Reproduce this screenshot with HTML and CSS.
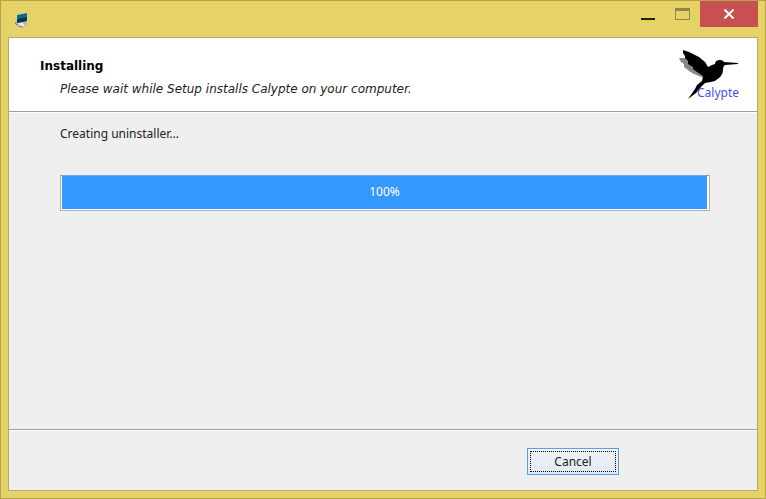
FILE: index.html
```html
<!DOCTYPE html>
<html lang="en">
  <head>
    <meta charset="UTF-8" />
    <meta name="viewport" content="width=device-width, initial-scale=1.0" />
    <title>Calypte Setup</title>
    <link rel="stylesheet" href="styles.css">
  </head>
  <body>
    <div class="window">
      <div class="titlebar">
        <svg class="app-icon" width="16" height="18" viewBox="0 0 16 18" aria-hidden="true">
          <path d="M1 11 L5 9 L13 11 L13 14 L9 17 L2 14 Z" fill="#b9b4b8" />
          <path d="M3 13 L7 11 L11 14 L8 16 Z" fill="#eee6df" />
          <path d="M1 12 L4 14 M5 15 L8 16" stroke="#6f6680" />
          <path d="M2 4 L13 1 L14 10 L3 13 Z" fill="#c6d8d3" />
          <path d="M3 4 L13 2 L13 10 L3 12 Z" fill="#126b82" />
          <path d="M3 8 L13 6 L13 10 L3 12 Z" fill="#07384f" />
        </svg>
        <div class="window-buttons">
          <button class="minimize" aria-label="Minimize">
            <svg width="14" height="12" viewBox="0 0 14 12"><path d="M0 10h14v2H0z" fill="#26210f" /></svg>
          </button>
          <button class="maximize" aria-label="Maximize" disabled>
            <svg width="15" height="12" viewBox="0 0 15 12"><path d="M.5 .5h14v11H.5z" fill="none" stroke="#938643" /><path d="M0 0h15v3H0z" fill="#938643" /></svg>
          </button>
          <button class="close" aria-label="Close">
            <svg width="12" height="10" viewBox="0 0 12 10"><path d="M1.500 .5l9 9M10.500 .5l-9 9" stroke="#fff" stroke-width="2" /></svg>
          </button>
        </div>
      </div>

      <div class="client">
        <header class="header">
          <div>
            <h1>Installing</h1>
            <p class="subtitle">Please wait while Setup installs Calypte on your computer.</p>
          </div>
          <svg class="logo" width="64" height="54" viewBox="0 0 64 54" role="img" aria-label="Calypte">
            <path d="M2 10 L10 10 L22 18 L29 26 L27 30 L22 28 L17 26 L12 23 L7 19 L7 16 L4 14 Z" fill="#888" />
            <path d="M6 2 L12 4 L22 9 L28 14 L31 19 L35 17 L38 16 Q38 12 43 12 Q46 12 47 14 L61 15 L61 16 L48 17 Q46 18 46 21 Q46 27 42 30 Q39 33 34 34 L28 35 L24 39 L19 45 L11 51 L18 41 L20 37 L25 33 L26 28 L20 24 L16 21 L16 19 L11 16 L11 13 L8 10 L8 8 L6 5 Z" fill="#000" />
            <text x="20" y="49" class="logo-text">Calypte</text>
          </svg>
        </header>

        <main class="content">
          <p id="status">Creating uninstaller...</p>
          <div class="progress" role="progressbar" aria-labelledby="status" aria-valuemin="0" aria-valuemax="100" aria-valuenow="100">
            <div class="progress-fill">100%</div>
          </div>
        </main>

        <footer class="footer">
          <button class="cancel">Cancel</button>
        </footer>
      </div>
    </div>
  </body>
</html>
```

FILE: styles.css
```css
* {
  box-sizing: border-box;
}
body {
  margin: 0;
  font-family: "Noto Sans", sans-serif;
  font-size: 12px;
  line-height: 16px;
  color: #222;
}
h1,
p {
  margin: 0;
}
button {
  border: 0;
  padding: 0;
  font: inherit;
  color: inherit;
}
.window {
  display: flex;
  flex-direction: column;
  min-height: 100vh;
  padding: 0 7px 7px;
  background: #e6d367;
  border: 1px solid #b5a446;
}

/* title bar */
.titlebar {
  display: flex;
  justify-content: space-between;
  height: 36px;
  padding-left: 6px;
}
.app-icon {
  margin-top: 10px;
}
.window-buttons {
  display: flex;
  height: 26px;
}
.window-buttons button {
  display: flex;
  align-items: center;
  justify-content: center;
  width: 34px;
  background: none;
}
.window-buttons .close {
  width: 58px;
  margin-left: 1px;
  background: #c75050;
}

/* window contents */
.client {
  display: flex;
  flex-direction: column;
  flex: 1;
  background: #efefef;
  border: 1px solid #b5a873;
}
.header {
  display: flex;
  justify-content: space-between;
  height: 74px;
  padding: 10px 16px 0 31px;
  background: #fff;
  border-bottom: 1px solid #a0a0a0;
}
h1 {
  margin-top: 10px;
  font-family: "DejaVu Sans", sans-serif;
  font-size: 12px;
  line-height: 16px;
  color: #000;
}
.subtitle {
  margin: 7px 0 0 20px;
  font-family: "DejaVu Sans", sans-serif;
  font-style: italic;
}
.logo-text {
  font-size: 12px;
  fill: #4a50e8;
}
.content {
  flex: 1;
  padding: 13px 47px 0 51px;
  border-top: 1px solid #fff;
}
.progress {
  height: 36px;
  margin-top: 33px;
  padding: 0 1px 1px;
  background: #fff;
  border: 1px solid #a9b4c0;
  border-top-color: #6da9e6;
}
.progress-fill {
  height: 33px;
  margin-right: 1px;
  background: #3399ff;
  color: #fff;
  line-height: 32px;
  text-align: center;
}
.footer {
  display: flex;
  justify-content: flex-end;
  height: 61px;
  padding: 18px 138px 0 0;
  border-top: 1px solid #a0a0a0;
  box-shadow: inset 0 1px #fff;
}
.cancel {
  width: 92px;
  height: 27px;
  background: linear-gradient(#f0f4f8, #e2e9f2);
  border: 1px solid #569de5;
  outline: 1px dotted #000;
  outline-offset: -4px;
}
```
